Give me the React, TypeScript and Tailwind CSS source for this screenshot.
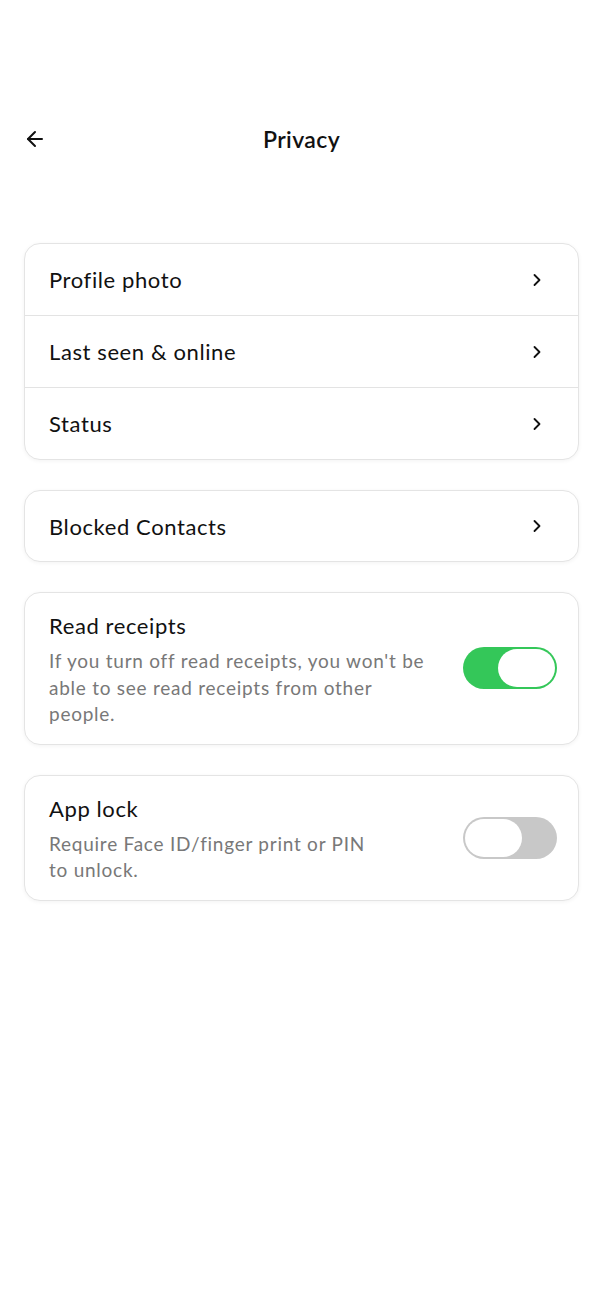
import { ArrowLeft, ChevronRight } from 'lucide-react';

const font = { fontFamily: 'Lato, "Noto Sans", sans-serif' };

const NavRow = ({ label, last, h = 'h-[71px]' }: { label: string; last?: boolean; h?: string }) => (
  <div className={`flex items-center justify-between pl-6 pr-[31px] ${last ? h : 'h-[72px] border-b border-[#e3e3e3]'}`}>
    <span className="text-[22px] text-[#111] tracking-[0.6px]">{label}</span>
    <ChevronRight size={20} strokeWidth={2.2} className="text-[#111]" />
  </div>
);

const Toggle = ({ on }: { on: boolean }) => (
  <div
    className={`w-[94px] h-[42px] rounded-full p-[2px] flex shrink-0 ${
      on ? 'bg-[#34c759] justify-end' : 'bg-[#c8c8c8] justify-start'
    }`}
  >
    <div className="w-[57px] h-[38px] rounded-full bg-white" />
  </div>
);

const Card = ({ children }: { children: React.ReactNode }) => (
  <div className="rounded-2xl border border-[#e4e4e4] bg-white shadow-[0_1px_4px_rgba(0,0,0,0.05)] overflow-hidden">
    {children}
  </div>
);

const SwitchCard = ({ title, desc, on }: { title: string; desc: React.ReactNode; on: boolean }) => (
  <Card>
    <div className="flex items-center justify-between pl-6 pr-[21px] pt-[16px] pb-[16px]">
      <div className="flex flex-col">
        <span className="text-[22px] text-[#111] leading-[34px] tracking-[0.6px]">{title}</span>
        <p className="text-[19px] text-[#787878] leading-[26.5px] mt-[5px] tracking-[0.75px]">{desc}</p>
      </div>
      <Toggle on={on} />
    </div>
  </Card>
);

export default function App() {
  return (
    <div className="min-h-[1311px] bg-white" style={font}>
      <div className="pt-[111px] px-6 h-[167px] relative flex items-center">
        <ArrowLeft size={24} strokeWidth={2} className="text-[#111] -ml-[1px]" />
        <h1 className="absolute left-0 right-0 text-center text-[23px] font-semibold text-[#111] tracking-[0.4px] pointer-events-none">
          Privacy
        </h1>
      </div>

      <div className="mt-[76px] px-6 flex flex-col gap-[30px]">
        <Card>
          <NavRow label="Profile photo" />
          <NavRow label="Last seen & online" />
          <NavRow label="Status" last />
        </Card>

        <Card>
          <NavRow label="Blocked Contacts" last h="h-[70px]" />
        </Card>

        <SwitchCard
          title="Read receipts"
          on
          desc={
            <>
              If you turn off read receipts, you won't be
              <br />
              able to see read receipts from other
              <br />
              people.
            </>
          }
        />

        <SwitchCard
          title="App lock"
          on={false}
          desc={
            <>
              Require Face ID/finger print or PIN
              <br />
              to unlock.
            </>
          }
        />
      </div>
    </div>
  );
}
